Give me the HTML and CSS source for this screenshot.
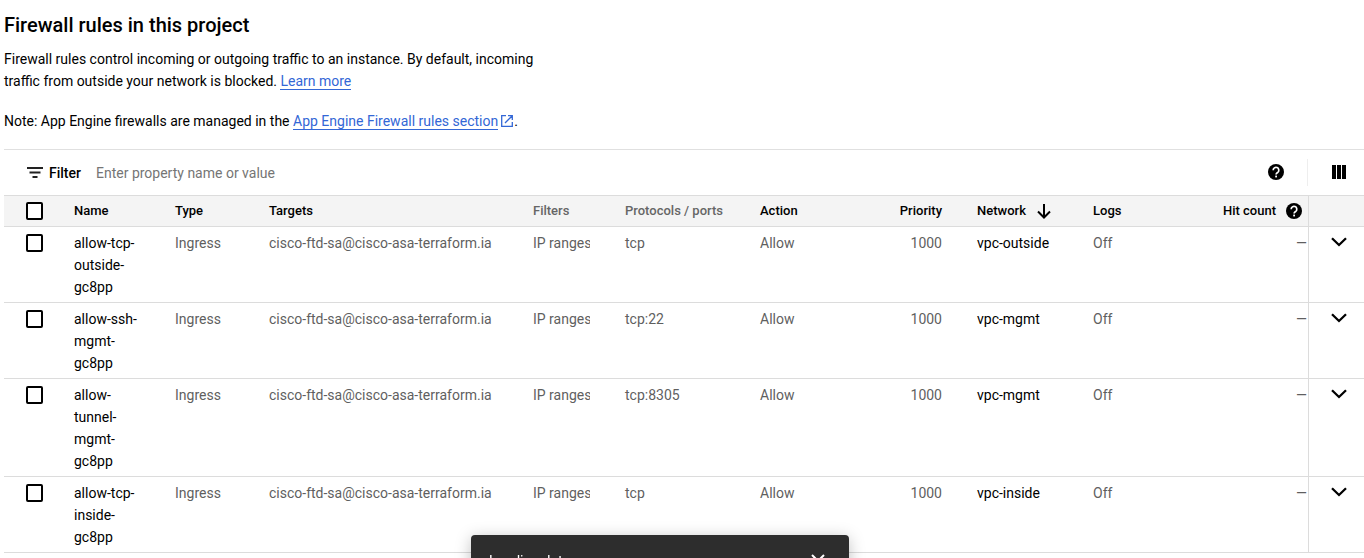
FILE: index.html
```html
<!DOCTYPE html>
<html lang="en">
<head>
<meta charset="utf-8">
<title>Firewall rules</title>
<link rel="stylesheet" href="styles.css">
</head>
<body>
<svg class="sprite" aria-hidden="true">
  <symbol id="help" viewBox="0 0 16 16"><circle cx="8" cy="8" r="8" fill="#000"/><path d="M5.200 6.300a2.800 2.800 0 1 1 4.600 2C8.800 9.100 8.100 9.300 8.100 10.600" fill="none" stroke="#fff" stroke-width="1.700"/><rect x="7.200" y="11.600" width="1.800" height="1.800" fill="#fff"/></symbol>
  <symbol id="chevron" viewBox="0 0 16 10"><path d="M1 1.200l7 6.800 7-6.800" fill="none" stroke="#000" stroke-width="2.300"/></symbol>
</svg>
<main class="page">
  <header class="intro">
    <h1 class="title">Firewall rules in this project</h1>
    <p class="text">Firewall rules control incoming or outgoing traffic to an instance. By default, incoming traffic from outside your network is blocked. <a class="link" href="#learn">Learn more</a></p>
    <p class="text">Note: App Engine firewalls are managed in the <a class="link" href="#appengine">App Engine Firewall rules section</a><svg class="external" viewBox="0 0 12 12" aria-hidden="true"><path d="M5 .7H.7v10.600h10.600V7M7 .7h4.300V5M11.300.7L4 8" fill="none" stroke="#3367d6" stroke-width="1.300"/></svg>.</p>
  </header>
  <div class="toolbar">
    <svg class="filter-icon" viewBox="0 0 16 11" aria-hidden="true"><path d="M0 1h16M2.500 5.500h11M5.500 10h5" stroke="#222" stroke-width="1.800"/></svg>
    <label class="filter-label" for="filter">Filter</label>
    <input class="filter-input" id="filter" type="text" placeholder="Enter property name or value">
    <button class="icon-button" type="button" aria-label="Help"><svg class="help"><use href="#help"/></svg></button>
    <button class="icon-button columns-button" type="button" aria-label="Column display options"><svg class="columns-icon" viewBox="0 0 14 14"><path d="M0 0h4v14H0zM5 0h4v14H5zM10 0h4v14h-4z"/></svg></button>
  </div>
  <table class="rules">
    <colgroup><col class="c-check"><col class="c-name"><col class="c-type"><col class="c-targets"><col class="c-filters"><col class="c-ports"><col class="c-action"><col class="c-priority"><col class="c-network"><col class="c-logs"><col class="c-hits"><col class="c-more"></colgroup>
    <thead>
      <tr>
        <th class="check"><input class="box" type="checkbox" aria-label="Select all"></th>
        <th>Name</th><th>Type</th><th>Targets</th><th class="plain">Filters</th><th class="plain">Protocols / ports</th><th>Action</th><th class="priority">Priority</th>
        <th><span class="head-flex">Network <svg class="arrow" viewBox="0 0 14 15" aria-hidden="true"><path d="M7 0v13M1 7.500l6 6 6-6" fill="none" stroke="#000" stroke-width="2"/></svg></span></th>
        <th>Logs</th>
        <th class="hits"><span class="head-flex head-end">Hit count <svg class="help" aria-hidden="true"><use href="#help"/></svg></span></th>
        <th class="more"></th>
      </tr>
    </thead>
    <tbody>
      <tr>
        <td class="check"><input class="box" type="checkbox" aria-label="Select allow-tcp-outside-gc8pp"></td>
        <td class="name">allow-tcp-outside-gc8pp</td><td>Ingress</td><td>cisco-ftd-sa@cisco-asa-terraform.ia</td><td><div class="clip">IP ranges</div></td><td>tcp</td><td>Allow</td><td class="priority">1000</td><td class="dark">vpc-outside</td><td>Off</td><td class="hits">—</td>
        <td class="more"><button class="expand" type="button" aria-label="Expand"><svg class="chevron"><use href="#chevron"/></svg></button></td>
      </tr>
      <tr>
        <td class="check"><input class="box" type="checkbox" aria-label="Select allow-ssh-mgmt-gc8pp"></td>
        <td class="name">allow-ssh-mgmt-gc8pp</td><td>Ingress</td><td>cisco-ftd-sa@cisco-asa-terraform.ia</td><td><div class="clip">IP ranges</div></td><td>tcp:22</td><td>Allow</td><td class="priority">1000</td><td class="dark">vpc-mgmt</td><td>Off</td><td class="hits">—</td>
        <td class="more"><button class="expand" type="button" aria-label="Expand"><svg class="chevron"><use href="#chevron"/></svg></button></td>
      </tr>
      <tr>
        <td class="check"><input class="box" type="checkbox" aria-label="Select allow-tunnel-mgmt-gc8pp"></td>
        <td class="name">allow-tunnel-mgmt-gc8pp</td><td>Ingress</td><td>cisco-ftd-sa@cisco-asa-terraform.ia</td><td><div class="clip">IP ranges</div></td><td>tcp:8305</td><td>Allow</td><td class="priority">1000</td><td class="dark">vpc-mgmt</td><td>Off</td><td class="hits">—</td>
        <td class="more"><button class="expand" type="button" aria-label="Expand"><svg class="chevron"><use href="#chevron"/></svg></button></td>
      </tr>
      <tr>
        <td class="check"><input class="box" type="checkbox" aria-label="Select allow-tcp-inside-gc8pp"></td>
        <td class="name">allow-tcp-inside-gc8pp</td><td>Ingress</td><td>cisco-ftd-sa@cisco-asa-terraform.ia</td><td><div class="clip">IP ranges</div></td><td>tcp</td><td>Allow</td><td class="priority">1000</td><td class="dark">vpc-inside</td><td>Off</td><td class="hits">—</td>
        <td class="more"><button class="expand" type="button" aria-label="Expand"><svg class="chevron"><use href="#chevron"/></svg></button></td>
      </tr>
    </tbody>
  </table>
</main>
<div class="toast" role="status">
  <span>Loading data</span>
  <button class="toast-close" type="button" aria-label="Close"><svg class="close" viewBox="0 0 14 14"><path d="M1 1l12 12M13 1L1 13" stroke="#fff" stroke-width="2"/></svg></button>
</div>
</body>
</html>
```
FILE: styles.css
```css
* { box-sizing: border-box; }
body {
  margin: 0;
  background: #fff;
  color: #000;
  font: 400 14px/22px Roboto, sans-serif;
}
button { border: 0; padding: 0; background: none; cursor: pointer; }
svg { display: block; flex: none; }
.sprite { position: absolute; width: 0; height: 0; }
.page { padding-left: 4px; }
.intro { padding: 12px 0 17px; }
.title { margin: 0 0 10px; font-size: 20px; line-height: 26px; font-weight: 500; }
.text { margin: 0 0 18px; max-width: 560px; }
.text:last-child { margin: 0; }
.link { color: #3367d6; text-decoration: none; border-bottom: 1px solid #3367d6; }
.external { display: inline-block; width: 12px; height: 12px; margin: 0 1px 0 3px; vertical-align: -1px; }

.toolbar {
  display: flex;
  align-items: center;
  height: 46px;
  padding-left: 23px;
  border-top: 1px solid #e0e0e0;
}
.filter-icon { width: 16px; height: 11px; margin-right: 6px; }
.filter-label { font-weight: 500; margin-right: 15px; }
.filter-input {
  flex: 1;
  min-width: 0;
  border: 0;
  padding: 0;
  outline: 0;
  background: none;
  font: inherit;
}
.filter-input::placeholder { color: #757575; opacity: 1; }
.icon-button { display: flex; align-items: center; justify-content: center; width: 63px; height: 27px; padding-bottom: 2px; }
.columns-button { width: 57px; padding-left: 6px; border-left: 1px solid #eee; }
.help { width: 16px; height: 16px; }
.columns-icon { width: 14px; height: 14px; }

.rules { width: 100%; table-layout: fixed; border-collapse: separate; border-spacing: 0; }
.c-check { width: 70px; }
.c-name { width: 101px; }
.c-type { width: 94px; }
.c-targets { width: 264px; }
.c-filters { width: 92px; }
.c-ports { width: 135px; }
.c-action { width: 100px; }
.c-priority { width: 117px; }
.c-network { width: 116px; }
.c-hits { width: 130px; }
.c-more { width: 56px; }
.rules th {
  height: 32px;
  padding: 0;
  background: #f4f4f4;
  border-top: 1px solid #dcdcdc;
  border-bottom: 1px solid #dcdcdc;
  font-size: 13px;
  line-height: 22px;
  font-weight: 500;
  text-align: left;
}
.rules .plain { color: #666; }
.rules td {
  padding: 5px 0 4px;
  border-bottom: 1px solid #dcdcdc;
  color: #5f5f5f;
  vertical-align: top;
}
.rules .check { padding-left: 22px; }
.rules .name { padding-right: 28px; color: #000; }
.rules .dark { color: #000; }
.rules .priority { padding-right: 35px; text-align: right; }
.rules .hits { padding-right: 1px; text-align: right; }
.rules .more { border-left: 1px solid #dcdcdc; }
.clip { width: 57px; overflow: hidden; white-space: nowrap; }
.head-flex { display: flex; align-items: center; gap: 11px; }
.head-end { gap: 10px; justify-content: flex-end; padding-right: 5px; }
.arrow { width: 14px; height: 15px; }
.box {
  display: block;
  appearance: none;
  width: 17px;
  height: 18px;
  margin: 2px 0;
  border: 2px solid #000;
  border-radius: 2px;
  background: #fff;
}
.expand { display: flex; align-items: center; justify-content: center; width: 100%; height: 20px; padding-left: 4px; }
.chevron { width: 16px; height: 10px; }

.toast {
  position: fixed;
  top: 535px;
  left: 471px;
  width: 378px;
  height: 52px;
  display: flex;
  align-items: center;
  justify-content: space-between;
  padding: 0 24px 0 18px;
  border-radius: 4px;
  background: #2d2d2d;
  color: #fff;
  box-shadow: 0 3px 16px rgba(0, 0, 0, .25);
}
.toast-close { display: flex; }
.close { width: 14px; height: 14px; }
```
